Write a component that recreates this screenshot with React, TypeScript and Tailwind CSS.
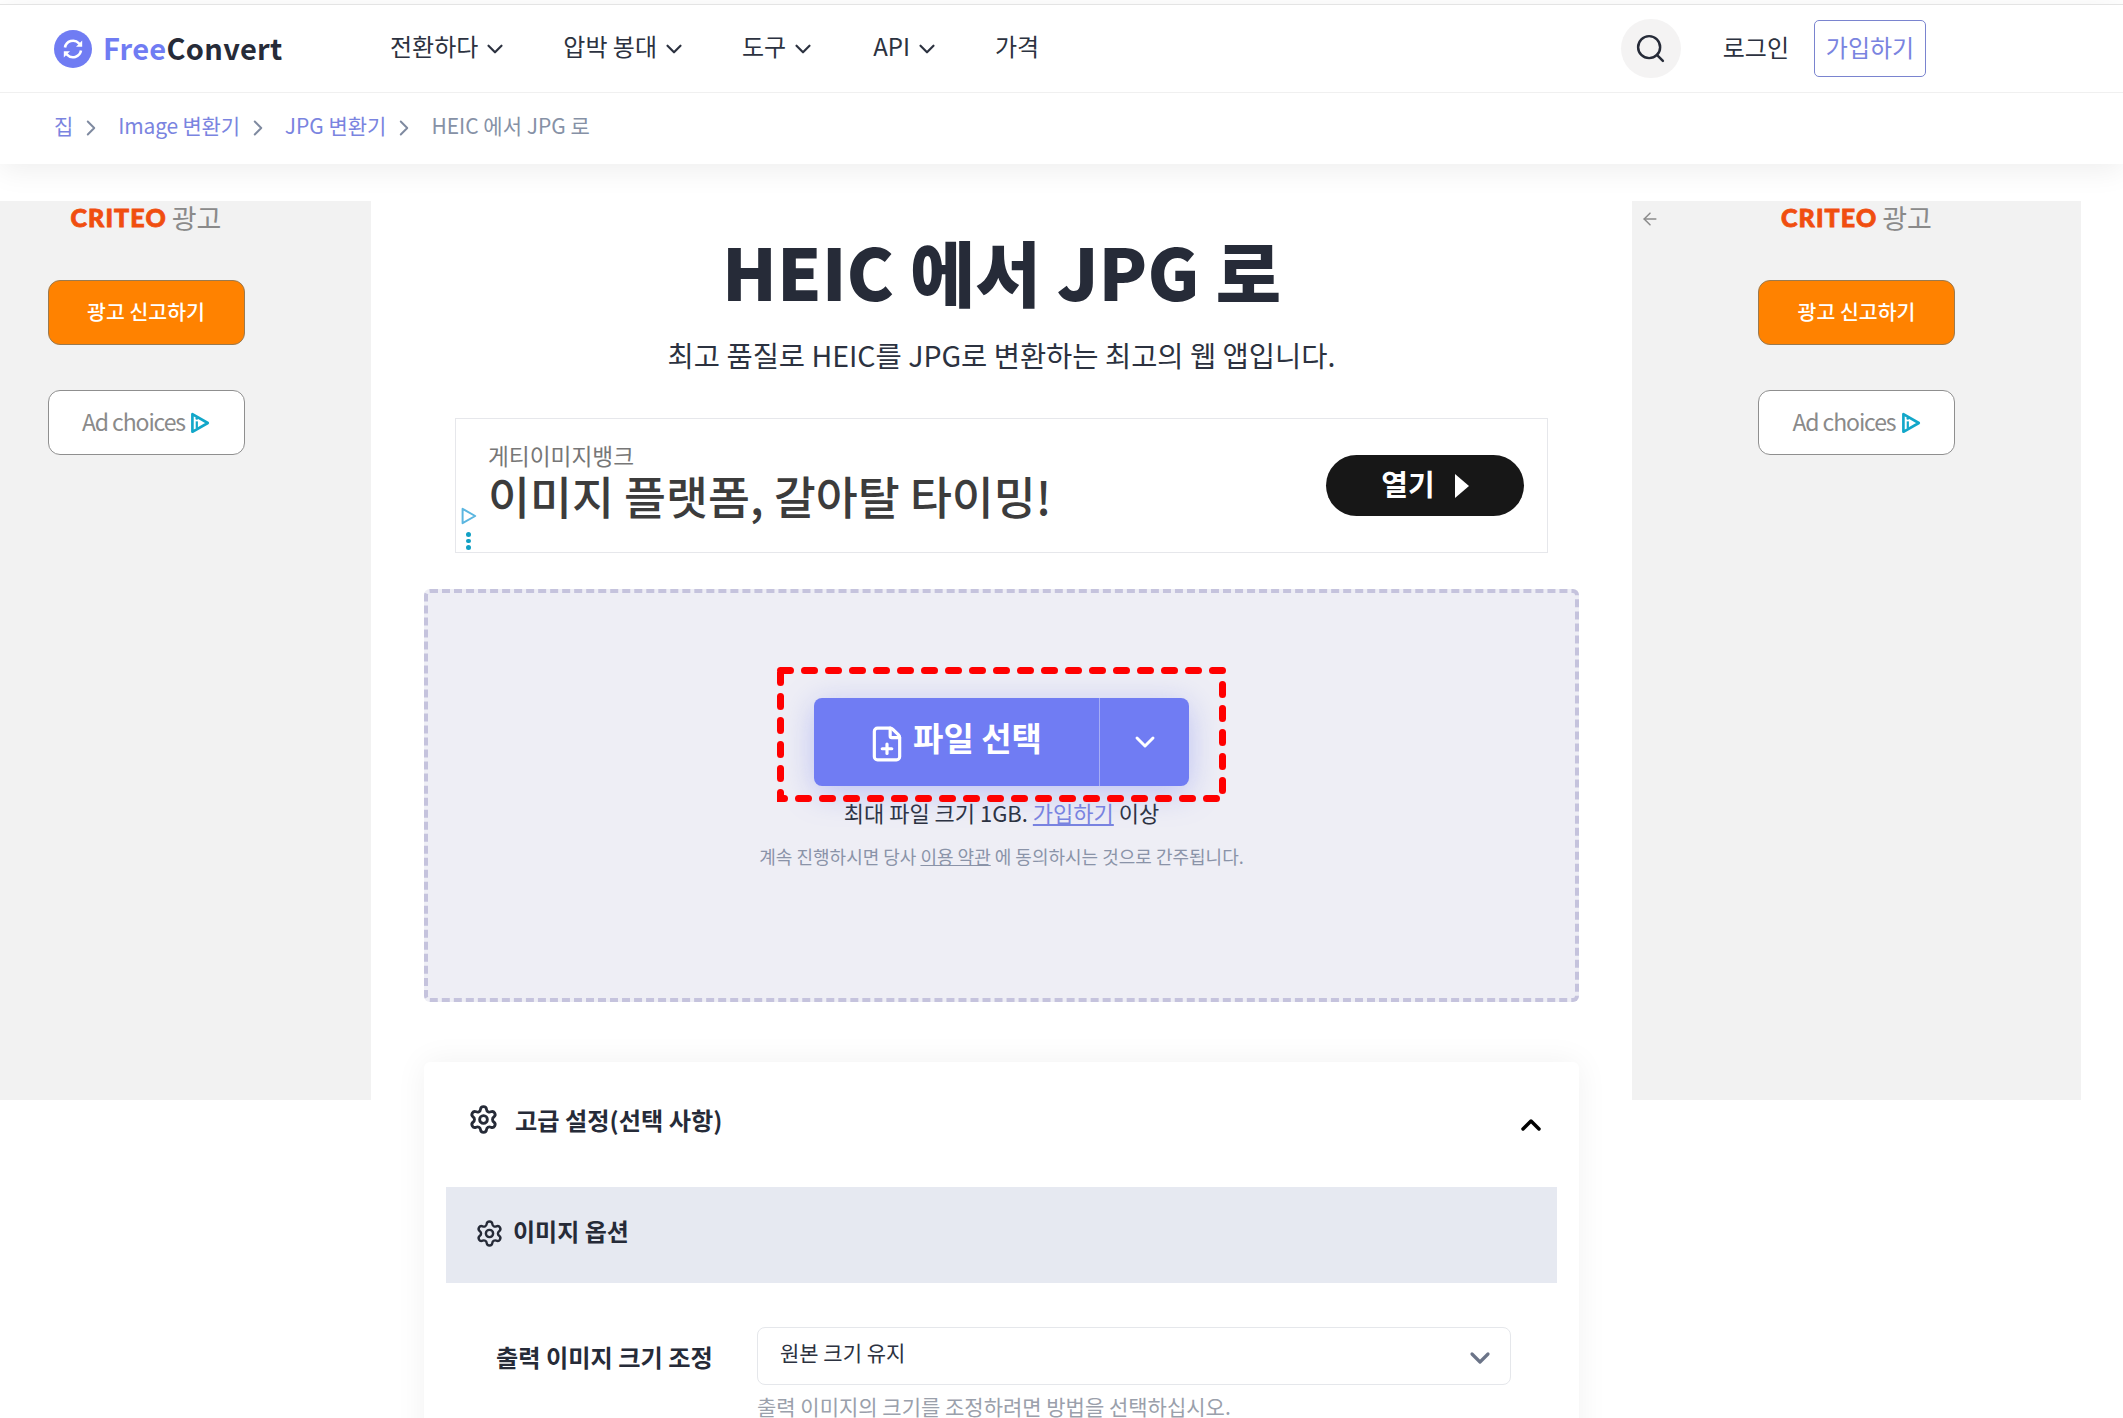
import React from "react";
import { ChevronDown, ChevronUp, ChevronRight, FilePlus, Search, Settings, ArrowLeft } from "lucide-react";

const font = { fontFamily: '"Noto Sans CJK KR", "Noto Sans", sans-serif' };

function NavItem({ label, chevron = true, className = "" }: { label: string; chevron?: boolean; className?: string }) {
  return (
    <div className={`flex items-center gap-[4px] text-[24px] leading-[32px] text-[#2c3240] ${className}`}>
      <span>{label}</span>
      {chevron && <ChevronDown className="mt-[6px] h-[26px] w-[26px] text-[#2c3240]" strokeWidth={2} />}
    </div>
  );
}

function AdIcon({ className }: { className?: string }) {
  return (
    <svg viewBox="0 0 20 20" className={className} fill="none">
      <path d="M4 2v16l14-8z" stroke="#12a7c9" strokeWidth="2.4" strokeLinejoin="round" />
      <path d="M8 8.5v6" stroke="#12a7c9" strokeWidth="2" />
      <circle cx="8" cy="5.8" r="1.2" fill="#12a7c9" />
    </svg>
  );
}

function AdSide({ back, className = "" }: { back?: boolean; className?: string }) {
  return (
    <div className={`relative flex h-[899px] flex-col items-center bg-[#f2f2f2] pt-[2px] ${className}`}>
      {back && <ArrowLeft className="absolute left-[8px] top-[8px] h-[20px] w-[20px] text-[#8b8b8b]" strokeWidth={1.8} />}
      <div className="flex h-[30px] items-center gap-[5px]">
        <span className="text-[25px] font-black tracking-[1.1px] text-[#f04e0f] [-webkit-text-stroke:0.8px_#f04e0f]" style={{ fontFamily: "Lato, sans-serif" }}>CRITEO</span>
        <span className="text-[27px] text-[#8a8a8a]">광고</span>
      </div>
      <div className="mt-[47px] flex h-[65px] w-[197px] items-center justify-center rounded-[12px] border border-[#9a7a50] bg-[#ff8200] pb-[2px] text-[20.5px] font-medium text-white">
        광고 신고하기
      </div>
      <div className="mt-[45px] flex h-[65px] w-[197px] items-center justify-center gap-[3px] rounded-[12px] border border-[#8f8f8f] bg-white pb-[2px] text-[23px] tracking-[-1.1px] text-[#8a8a8a]">
        Ad choices
        <AdIcon className="mt-[2px] h-[22px] w-[22px]" />
      </div>
    </div>
  );
}

function Sep() {
  return <ChevronRight className="ml-[5px] mr-[14px] mt-[3px] h-[26px] w-[26px] text-[#7f8aa0]" strokeWidth={1.8} />;
}

export default function App() {
  return (
    <div className="h-[1418px] w-[2123px] overflow-hidden bg-white" style={font}>
      <div className="h-[4px] bg-white" />
      <header className="relative z-10 bg-white shadow-[0_6px_28px_rgba(0,0,0,0.07)]">
        <div className="flex h-[89px] items-center border-y border-t-[#e4e4e4] border-b-[#f0f0f0] pl-[54px] pr-[197px]">
          <div className="flex w-[336px] items-center gap-[11px]">
            <svg viewBox="0 0 38 38" className="h-[38px] w-[38px]">
              <circle cx="19" cy="19" r="19" fill="#707cf3" />
              <path d="M11 17.5a8.2 8.2 0 0 1 14-4.2l2 2" fill="none" stroke="#fff" strokeWidth="2.6" />
              <path d="M28.2 10.5v6.2h-6.2z" fill="#fff" />
              <path d="M27 20.5a8.2 8.2 0 0 1-14 4.2l-2-2" fill="none" stroke="#fff" strokeWidth="2.6" />
              <path d="M9.8 27.5v-6.2h6.2z" fill="#fff" />
            </svg>
            <div className="-mt-[2px] text-[29px] font-bold leading-none tracking-[0.3px]">
              <span className="text-[#707cf3]">Free</span>
              <span className="text-[#262b38]">Convert</span>
            </div>
          </div>
          <nav className="-mt-[6px] flex items-center gap-[55px]">
            <NavItem label="전환하다" />
            <NavItem label="압박 봉대" />
            <NavItem label="도구" />
            <NavItem label="API" className="ml-[2px]" />
            <NavItem label="가격" chevron={false} />
          </nav>
          <div className="ml-auto flex items-center">
            <div className="flex h-[59px] w-[60px] items-center justify-center rounded-full bg-[#f4f3f3]">
              <Search className="h-[33px] w-[33px] text-[#262b38]" strokeWidth={1.8} />
            </div>
            <span className="-mt-[4px] ml-[42px] text-[24px] text-[#2c3240]">로그인</span>
            <div className="ml-[25px] flex h-[57px] w-[112px] items-center justify-center rounded-[5px] border border-[#7a84cf] pb-[4px] text-[24px] text-[#7a84e0]">
              가입하기
            </div>
          </div>
        </div>
        <div className="flex h-[71px] items-center pb-[5px] pl-[54px] text-[21px] text-[#7a84e0]">
          <span>집</span>
          <Sep />
          <span className="tracking-[-0.2px]">Image 변환기</span>
          <Sep />
          <span>JPG 변환기</span>
          <Sep />
          <span className="text-[#8691a6]">HEIC 에서 JPG 로</span>
        </div>
      </header>

      <main className="flex items-start">
        <aside className="mt-[37px] w-[371px] shrink-0">
          <AdSide className="pr-[79px]" />
        </aside>

        <div className="ml-[53px] flex w-[1155px] shrink-0 flex-col">
          <h1 className="mt-[56px] text-center text-[71px] font-black leading-[100px] text-[#262b38]">HEIC 에서 JPG 로</h1>
          <p className="mt-[15px] text-center text-[28.5px] leading-[40px] text-[#2c3240]">최고 품질로 HEIC를 JPG로 변환하는 최고의 웹 앱입니다.</p>

          <div className="relative mx-[31px] mt-[43px] flex h-[135px] items-center justify-between border border-[#e6e7eb] bg-white pl-[32px] pr-[23px]">
            <div className="-mt-[5px]">
              <div className="text-[22.7px] leading-[24px] text-[#777]">게티이미지뱅크</div>
              <div className="text-[45.6px] font-medium leading-[54px] text-[#3c3c3c]">이미지 플랫폼, 갈아탈 타이밍!</div>
            </div>
            <div className="flex h-[61px] w-[198px] items-center justify-center gap-[20px] rounded-full bg-[#171717] text-[29px] font-bold text-white">
              <span className="-mt-[3px]">열기</span>
              <svg viewBox="0 0 14 24" className="h-[24px] w-[14px]"><path d="M0 0l14 12L0 24z" fill="#fff" /></svg>
            </div>
            <svg viewBox="0 0 20 20" className="absolute left-[3px] top-[87px] h-[20px] w-[18px]" fill="none">
              <path d="M4 2v16l14-8z" stroke="#5bb6e0" strokeWidth="2.2" strokeLinejoin="round" />
            </svg>
            <div className="absolute left-[10px] top-[113px] flex flex-col gap-[2px]">
              <span className="h-[4.5px] w-[4.5px] rounded-full bg-[#12a0c4]" />
              <span className="h-[4.5px] w-[4.5px] rounded-full bg-[#12a0c4]" />
              <span className="h-[4.5px] w-[4.5px] rounded-full bg-[#12a0c4]" />
            </div>
          </div>

          <div className="mt-[36px] flex h-[413px] flex-col items-center rounded-[6px] border-4 border-dashed border-[#c5c3dd] bg-[#eeeef5] pt-[105px]">
            <div className="relative flex h-[88px] w-[375px] rounded-[8px] bg-[#707cf3] text-white shadow-[0_6px_32px_rgba(112,124,243,0.4)]">
              <div className="flex w-[286px] items-center justify-center gap-[7px] border-r border-[#a5adf6] pr-[3px] text-[33px] font-bold">
                <FilePlus className="mt-[3px] h-[38px] w-[38px]" strokeWidth={2} />
                <span className="-mt-[8px]">파일 선택</span>
              </div>
              <div className="flex flex-1 items-center justify-center">
                <ChevronDown className="h-[32px] w-[32px]" strokeWidth={2.2} />
              </div>
              <svg className="pointer-events-none absolute -left-[37px] -top-[31px] h-[135px] w-[449px]" viewBox="0 0 449 135" fill="none">
                <rect x="3.5" y="3.5" width="442" height="128" stroke="#ff0000" strokeWidth="7" strokeLinecap="round" strokeDasharray="10 14" />
              </svg>
            </div>
            <div className="mt-[11px] text-[22px] leading-[30px] text-[#2c3240]">
              최대 파일 크기 1GB. <span className="text-[#7a84e0] underline">가입하기</span> 이상
            </div>
            <div className="mt-[16px] text-[18px] leading-[26px] text-[#8a93a8]">
              계속 진행하시면 당사 <span className="underline">이용 약관</span> 에 동의하시는 것으로 간주됩니다.
            </div>
          </div>

          <div className="mt-[60px] rounded-t-[6px] bg-white shadow-[0_0_32px_rgba(0,0,0,0.06)]">
            <div className="flex h-[125px] items-center justify-between pl-[44px] pr-[32px]">
              <div className="-mt-[9px] flex items-center gap-[16px] text-[24.2px] font-bold text-[#262b38]">
                <Settings className="h-[31px] w-[31px]" strokeWidth={2.2} />
                <span>고급 설정(선택 사항)</span>
              </div>
              <ChevronUp className="mt-[1px] h-[32px] w-[32px] text-black" strokeWidth={2.6} />
            </div>
            <div className="mx-[22px] flex h-[96px] items-center gap-[9px] bg-[#e6e9f1] pl-[29px] text-[24px] font-bold text-[#262b38]">
              <Settings className="-mt-[3px] h-[29px] w-[29px]" strokeWidth={2} />
              <span className="-mt-[9px]">이미지 옵션</span>
            </div>
            <div className="flex pl-[72px] pt-[44px]">
              <div className="w-[261px] pt-[12px] text-[24.2px] font-bold leading-[36px] text-[#262b38]">출력 이미지 크기 조정</div>
              <div className="w-[754px]">
                <div className="flex h-[58px] items-center justify-between rounded-[8px] border border-[#e5e7eb] pl-[22px] pr-[14px] text-[21px] text-[#2c3240]">
                  <span className="-mt-[6px]">원본 크기 유지</span>
                  <ChevronDown className="mt-[4px] h-[32px] w-[32px] text-[#6b7488]" strokeWidth={2.4} />
                </div>
                <div className="mt-[6px] text-[21px] leading-[30px] text-[#9aa0ab]">출력 이미지의 크기를 조정하려면 방법을 선택하십시오.</div>
              </div>
            </div>
            <div className="h-[60px]" />
          </div>
        </div>

        <aside className="ml-[53px] mt-[37px] w-[449px] shrink-0">
          <AdSide back />
        </aside>
      </main>
    </div>
  );
}
